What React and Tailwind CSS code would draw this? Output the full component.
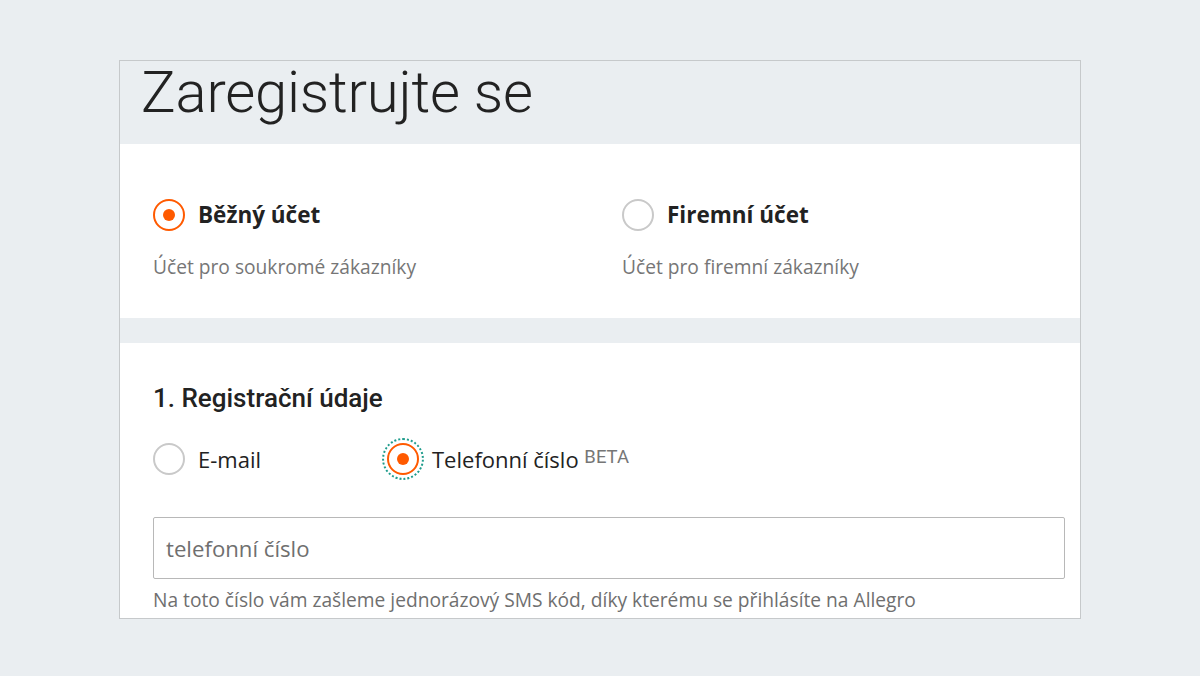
import { useState } from "react";

function Radio({ checked, focused }) {
  return (
    <span className="relative flex h-8 w-8 shrink-0 items-center justify-center">
      {focused && (
        <span className="absolute -inset-[5px] rounded-full border-[2px] border-dotted border-[#1f9c8c]" />
      )}
      <span
        className={`flex h-8 w-8 items-center justify-center rounded-full border-2 bg-white ${
          checked ? "border-[#ff5a00]" : "border-[#c9c9c9]"
        }`}
      >
        {checked && <span className="h-3 w-3 rounded-full bg-[#ff5a00]" />}
      </span>
    </span>
  );
}

export default function App() {
  const [account, setAccount] = useState("private");
  const [method, setMethod] = useState("phone");

  return (
    <div className="flex min-h-[676px] w-full justify-center bg-[#eaeef1] pt-[60px] font-['Open_Sans',sans-serif]">
      <div className="h-[559px] w-[962px] border border-[#c6c9cb] bg-[#eaeef1]">
        {/* Header */}
        <div className="flex h-[83px] items-start px-[21px]">
          <h1 className="relative -top-[2px] font-['Roboto',sans-serif] text-[58px] font-light leading-[66px] tracking-[-0.2px] text-[#222222]">
            Zaregistrujte se
          </h1>
        </div>

        {/* Account type */}
        <div className="grid h-[174px] grid-cols-2 bg-white px-[33px] pt-[55px]">
          <button className="flex flex-col items-start text-left" onClick={() => setAccount("private")}>
            <span className="flex items-center gap-[13px]">
              <Radio checked={account === "private"} />
              <span className="text-[22.5px] font-bold leading-8 text-[#222222]">Běžný účet</span>
            </span>
            <span className="mt-[23px] text-[19.2px] leading-[26px] text-[#767676]">Účet pro soukromé zákazníky</span>
          </button>
          <button className="flex flex-col items-start pl-[22px] text-left" onClick={() => setAccount("company")}>
            <span className="flex items-center gap-[13px]">
              <Radio checked={account === "company"} />
              <span className="text-[22.5px] font-bold leading-8 text-[#222222]">Firemní účet</span>
            </span>
            <span className="mt-[23px] text-[19.2px] leading-[26px] text-[#767676]">Účet pro firemní zákazníky</span>
          </button>
        </div>

        {/* Registration data */}
        <div className="mt-[25px] h-[275px] bg-white px-[33px] pt-[39px]">
          <h2 className="font-['Roboto',sans-serif] text-[26px] font-medium leading-[32px] text-[#222222]">
            1. Registrační údaje
          </h2>
          <div className="mt-[29px] flex items-center">
            <button className="flex w-[234px] items-center gap-[13px]" onClick={() => setMethod("email")}>
              <Radio checked={method === "email"} />
              <span className="text-[22px] leading-8 text-[#222222]">E-mail</span>
            </button>
            <button className="flex items-center gap-[13px]" onClick={() => setMethod("phone")}>
              <Radio checked={method === "phone"} focused />
              <span className="text-[22px] leading-8 text-[#222222]">
                Telefonní číslo{" "}
                <sup className="relative -top-[5px] font-['Roboto',sans-serif] text-[18.5px] text-[#767676]">BETA</sup>
              </span>
            </button>
          </div>
          <input
            type="text"
            placeholder="telefonní číslo"
            className="mt-[42px] block h-[62px] w-[912px] rounded-[2px] border border-[#b8b8b8] px-[12px] text-[22.2px] text-[#222222] placeholder:text-[#6f6f6f] outline-none"
          />
          <p className="mt-[8px] text-[19.2px] leading-[26px] text-[#6f6f6f]">
            Na toto číslo vám zašleme jednorázový SMS kód, díky kterému se přihlásíte na Allegro
          </p>
        </div>
      </div>
    </div>
  );
}
